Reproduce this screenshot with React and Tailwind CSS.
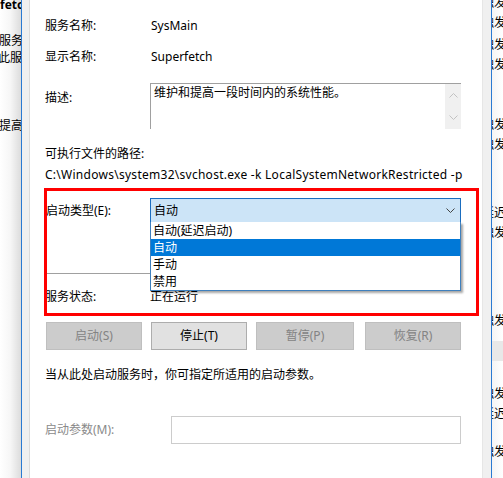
import React from "react";

const font = { fontFamily: '"Noto Sans", "Noto Sans CJK SC", sans-serif' };

function Chevron({ className }) {
  return (
    <svg width="9" height="5" viewBox="0 0 9 5" className={className}>
      <path d="M0.5 0.5 L4.5 4.5 L8.5 0.5" fill="none" stroke="currentColor" strokeWidth="1" />
    </svg>
  );
}

function Btn({ children, disabled, className = "" }) {
  return (
    <div
      className={
        "h-[28px] w-[96px] flex items-center justify-center border text-[12px] " +
        (disabled
          ? "bg-[#cccccc] border-[#bfbfbf] text-[#838383] "
          : "bg-[#e1e1e1] border-[#adadad] text-black ") +
        className
      }
    >
      {children}
    </div>
  );
}

export default function App() {
  const rightRows = [
    { c: "-mt-[7px]", t: "触发" },
    { c: "", t: "触发" },
    { c: "mt-[2px]", t: "触发" },
    { c: "", t: "触发" },
    { c: "mt-[40px]", t: "触发" },
    { c: "", t: "触发" },
    { c: "mt-[48px]", t: "延迟" },
    { c: "", t: "触发" },
  ];
  return (
    <div className="w-[503px] h-[478px] flex overflow-hidden bg-white text-black" style={font}>
      {/* left background window strip */}
      <div className="w-[21px] shrink-0 bg-gradient-to-r from-white via-[#f6f6f6] to-[#dcdcdc] overflow-hidden text-[12px] leading-[16px] whitespace-nowrap">
        <div className="-mt-[3px] font-bold">fetch</div>
        <div className="mt-[20px] -ml-[1px]">服务</div>
        <div className="mt-[1px] -ml-[2px]">此服务</div>
        <div className="mt-[52px] -ml-[1px]">提高</div>
      </div>
      <div className="w-[1px] shrink-0 bg-[#2a7ad2]" />
      <div className="w-[7px] shrink-0 bg-[#f0f0f0] border-r border-[#dcdcdc] box-content" />

      {/* dialog panel */}
      <div className="relative w-[452px] shrink-0 bg-white pl-[15px] pr-[21px] pt-[18px] flex flex-col text-[12px] leading-[16px]">
        <div className="flex h-[16px]">
          <div className="w-[105px]">服务名称:</div>
          <div className="pl-[1px]">SysMain</div>
        </div>
        <div className="flex h-[16px] mt-[15px]">
          <div className="w-[105px]">显示名称:</div>
          <div className="pl-[1px]">Superfetch</div>
        </div>
        <div className="flex mt-[18px]">
          <div className="w-[105px] pt-[7px]">描述:</div>
          <div className="flex-1 h-[46px] flex border-l border-t border-[#a0a0a0]">
            <div className="flex-1 pl-[3px] pt-[1px]">维护和提高一段时间内的系统性能。</div>
            <div className="w-[16px] bg-[#f0f0f0] flex flex-col items-center justify-between py-[9px] text-[#c2c2c2]">
              <Chevron className="rotate-180" />
              <Chevron />
            </div>
          </div>
        </div>
        <div className="mt-[17px] h-[16px]">可执行文件的路径:</div>
        <div className="mt-[5px] h-[16px] whitespace-nowrap tracking-[0.27px]">
          C:\Windows\system32\svchost.exe -k LocalSystemNetworkRestricted -p
        </div>

        <div className="flex items-center mt-[15px] h-[25px]">
          <div className="w-[105px] pl-[1px]">启动类型(E):</div>
          <div className="relative flex-1 h-[25px] bg-[#cce4f7] border border-[#1a6dbf] flex items-center justify-between pl-[3px] pr-[5px]">
            <span>自动</span>
            <Chevron className="text-[#444]" />
            <div className="absolute z-10 left-[-1px] right-[-1px] top-full bg-white border border-t-0 border-[#3f80bd] shadow-[2px_2px_2px_rgba(0,0,0,0.35)]">
              <div className="h-[17px] pl-[2px] leading-[18px]">自动(延迟启动)</div>
              <div className="h-[17px] pl-[2px] leading-[18px] bg-[#0078d7] text-white">自动</div>
              <div className="h-[17px] pl-[2px] leading-[18px]">手动</div>
              <div className="h-[17px] pl-[2px] leading-[18px]">禁用</div>
            </div>
          </div>
        </div>

        <div className="mt-[50px] h-[1px] bg-[#a0a0a0]" />
        <div className="flex mt-[15px] h-[16px]">
          <div className="w-[105px]">服务状态:</div>
          <div>正在运行</div>
        </div>

        <div className="flex mt-[17px] pl-[1px]">
          <Btn disabled>启动(S)</Btn>
          <Btn className="ml-[9px]">停止(T)</Btn>
          <Btn disabled className="ml-[9px] w-[98px]">暂停(P)</Btn>
          <Btn disabled className="ml-[11px]">恢复(R)</Btn>
        </div>

        <div className="mt-[17px] h-[16px]">当从此处启动服务时，你可指定所适用的启动参数。</div>

        <div className="flex items-center mt-[33px]">
          <div className="w-[126px] text-[#8a8a8a]">启动参数(M):</div>
          <div className="flex-1 h-[28px] border border-[#cccccc]" />
        </div>

        {/* red annotation box */}
        <div className="absolute left-[14px] top-[188px] w-[435px] h-[128px] border-[3px] border-[#ff0000] pointer-events-none" />
      </div>

      <div className="w-[9px] shrink-0 bg-[#f0f0f0] border-l border-[#e6e6e6]" />
      <div className="w-[1px] shrink-0 bg-[#2a7ad2]" />
      <div className="flex-1 bg-gradient-to-r from-[#f4f4f4] to-white overflow-hidden text-[12px] leading-[20px] whitespace-nowrap flex flex-col">
        {rightRows.map((r, i) => (
          <div key={i} className={"-ml-[10px] h-[20px] " + r.c}>{r.t}</div>
        ))}
        <div className="mt-[68px] -ml-[10px] h-[20px]">触发</div>
        <div className="mt-[10px] h-[20px] bg-[#e8e8e8]" />
        <div className="mt-[23px] -ml-[10px] h-[20px]">触发</div>
        <div className="-ml-[10px] h-[20px]">延迟</div>
        <div className="mt-[18px] -ml-[10px] h-[20px]">触发</div>
      </div>
    </div>
  );
}
